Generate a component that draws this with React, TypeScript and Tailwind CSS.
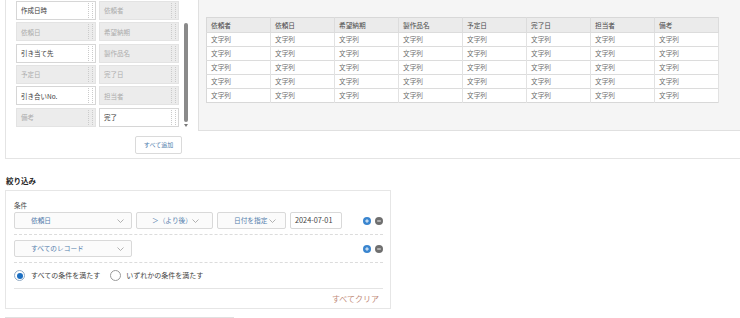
import clsx from 'clsx'

const fields: [string, boolean][] = [
  ['作成日時', true],
  ['依頼者', false],
  ['依頼日', false],
  ['希望納期', false],
  ['引き当て先', true],
  ['製作品名', false],
  ['予定日', false],
  ['完了日', false],
  ['引き合いNo.', true],
  ['担当者', false],
  ['備考', false],
  ['完了', true],
]

const headers = ['依頼者', '依頼日', '希望納期', '製作品名', '予定日', '完了日', '担当者', '備考']

function Chip({ label, active }: { label: string; active: boolean }) {
  return (
    <div
      className={clsx(
        'flex h-[19px] items-center justify-between border pl-[4px] pr-[2px] text-[6.5px] leading-none',
        active ? 'border-[#d6d6d6] bg-white text-[#3a3a3a]' : 'border-[#e3e3e3] bg-[#ececec] text-[#adadad]'
      )}
    >
      <span>{label}</span>
      <span className="h-[15px] w-[5px] border-x border-dotted border-[#cbcbcb]" />
    </div>
  )
}

function Chevron() {
  return (
    <svg width="7" height="4" viewBox="0 0 7 4" className="shrink-0">
      <path d="M0.5 0.5 L3.5 3.5 L6.5 0.5" fill="none" stroke="#a0a0a0" strokeWidth="0.8" />
    </svg>
  )
}

function Select({ label, className }: { label: string; className: string }) {
  return (
    <div
      className={clsx(
        'flex h-[17px] items-center justify-between rounded-[2px] border border-[#d9d9d9] bg-[#fbfbfb] text-[6.7px] leading-none text-[#5580ad]',
        className
      )}
    >
      <span>{label}</span>
      <Chevron />
    </div>
  )
}

function PlusMinus() {
  return (
    <div className="ml-auto flex gap-[4px]">
      <span className="flex h-[8px] w-[8px] items-center justify-center rounded-full bg-[#3a85cf]">
        <svg width="6" height="6" viewBox="0 0 6 6">
          <path d="M3 1.2 V4.8 M1.2 3 H4.8" stroke="#fff" strokeWidth="0.9" />
        </svg>
      </span>
      <span className="flex h-[8px] w-[8px] items-center justify-center rounded-full bg-[#6f6f6f]">
        <svg width="6" height="6" viewBox="0 0 6 6">
          <path d="M1.2 3 H4.8" stroke="#fff" strokeWidth="0.9" />
        </svg>
      </span>
    </div>
  )
}

export default function App() {
  return (
    <div className="h-[318px] w-[740px] overflow-hidden bg-white font-['Noto_Sans_CJK_JP','Noto_Sans',sans-serif]">
      {/* Columns picker + preview */}
      <div className="ml-[5px] flex h-[159px] border-b border-l border-[#e4e4e4]">
        <div className="flex w-[192px] shrink-0 flex-col pl-[10px]">
          <div className="flex">
            <div className="grid grid-cols-[80px_80px] gap-x-[3px] gap-y-[2px] pt-[1px]">
              {fields.map(([label, active]) => (
                <Chip key={label} label={label} active={active} />
              ))}
            </div>
            <div className="ml-[5px] flex w-[4px] flex-col items-center">
              <div className="mt-[23px] h-[99px] w-[4px] rounded-full bg-[#8a8a8a]" />
              <svg width="4" height="3" viewBox="0 0 4 3" className="mt-[2px]">
                <path d="M0 0 H4 L2 3 Z" fill="#7a7a7a" />
              </svg>
            </div>
          </div>
          <div className="mt-[9px] flex w-[166px] justify-end">
            <button className="h-[18px] w-[47px] rounded-[2px] border border-[#dadada] bg-white text-[6px] leading-none text-[#4f7eac]">
              すべて追加
            </button>
          </div>
        </div>

        <div className="h-[131px] flex-1 border-b border-l border-[#e0e0e0] bg-[#f5f5f5] pl-[7px] pt-[17px]">
          <table className="w-[513px] table-fixed border-collapse border border-[#d8d8d8] text-[6.7px] leading-none">
            <thead>
              <tr className="h-[15px] bg-[#ebebeb]">
                {headers.map((h) => (
                  <th key={h} className="border-r border-[#dcdcdc] pl-[4px] text-left font-normal text-[#4a4a4a]">
                    {h}
                  </th>
                ))}
              </tr>
            </thead>
            <tbody>
              {[0, 1, 2, 3, 4].map((r) => (
                <tr key={r} className="h-[14px] border-t border-[#dcdcdc] bg-white">
                  {headers.map((h) => (
                    <td key={h} className="border-r border-[#e2e2e2] pl-[4px] text-[#707070]">
                      文字列
                    </td>
                  ))}
                </tr>
              ))}
            </tbody>
          </table>
        </div>
      </div>

      {/* Filter */}
      <div className="ml-[6px] mt-[17px] text-[7.5px] font-bold leading-[10px] text-[#222]">絞り込み</div>
      <div className="ml-[5px] mt-[4px] w-[386px] border border-[#e6e6e6] pb-[4px] pl-[8px] pr-[7px] pt-[9px]">
        <div className="text-[6.5px] leading-[10px] text-[#444]">条件</div>
        <div className="mt-[2px] flex items-center gap-[4px]">
          <Select label="依頼日" className="w-[118px] pl-[16px] pr-[7px]" />
          <Select label="＞（より後）" className="w-[77px] pl-[15px] pr-[13px]" />
          <Select label="日付を指定" className="w-[69px] pl-[16px] pr-[9px]" />
          <div className="flex h-[17px] w-[52px] items-center rounded-[2px] border border-[#d9d9d9] bg-white pl-[4px] text-[7.3px] leading-none text-[#444]">
            2024-07-01
          </div>
          <PlusMinus />
        </div>
        <div className="my-[5px] border-t border-dashed border-[#dcdcdc]" />
        <div className="flex items-center">
          <Select label="すべてのレコード" className="w-[118px] pl-[16px] pr-[7px]" />
          <PlusMinus />
        </div>
        <div className="mt-[5px] border-t border-dashed border-[#dcdcdc]" />
        <div className="mt-[7px] flex h-[11px] items-center text-[7px] leading-none text-[#444]">
          <span className="flex h-[11px] w-[11px] items-center justify-center rounded-full border border-[#8fa9c4] bg-white">
            <span className="h-[6px] w-[6px] rounded-full bg-[#1c6fc2]" />
          </span>
          <span className="ml-[6px]">すべての条件を満たす</span>
          <span className="ml-[10px] h-[11px] w-[11px] rounded-full border border-[#9a9a9a] bg-white" />
          <span className="ml-[5px]">いずれかの条件を満たす</span>
        </div>
        <div className="mt-[7px] border-t border-[#e4e4e4]" />
        <div className="mt-[5px] pr-[4px] text-right text-[8px] leading-[10px] text-[#bf8b79]">すべてクリア</div>
      </div>
      <div className="ml-[5px] mt-[8px] w-[229px] border-t border-[#e0e0e0]" />
    </div>
  )
}
